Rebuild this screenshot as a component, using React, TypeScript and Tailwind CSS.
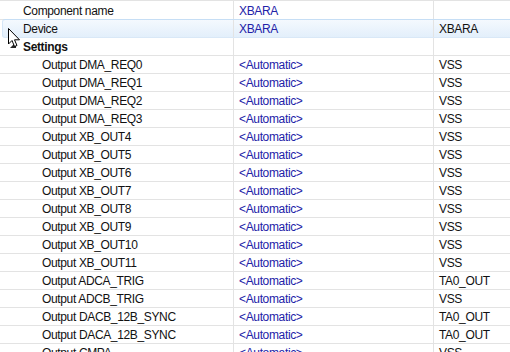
import React from "react";

type Row = { name: string; value: string; third: string; level: number; bold?: boolean; selected?: boolean };

const outputs: [string, string][] = [
  ["Output DMA_REQ0", "VSS"],
  ["Output DMA_REQ1", "VSS"],
  ["Output DMA_REQ2", "VSS"],
  ["Output DMA_REQ3", "VSS"],
  ["Output XB_OUT4", "VSS"],
  ["Output XB_OUT5", "VSS"],
  ["Output XB_OUT6", "VSS"],
  ["Output XB_OUT7", "VSS"],
  ["Output XB_OUT8", "VSS"],
  ["Output XB_OUT9", "VSS"],
  ["Output XB_OUT10", "VSS"],
  ["Output XB_OUT11", "VSS"],
  ["Output ADCA_TRIG", "TA0_OUT"],
  ["Output ADCB_TRIG", "VSS"],
  ["Output DACB_12B_SYNC", "TA0_OUT"],
  ["Output DACA_12B_SYNC", "TA0_OUT"],
  ["Output CMPA", "VSS"],
];

const rows: Row[] = [
  { name: "Component name", value: "XBARA", third: "", level: 0 },
  { name: "Device", value: "XBARA", third: "XBARA", level: 0, selected: true },
  { name: "Settings", value: "", third: "", level: 0, bold: true },
  ...outputs.map(([n, t]) => ({ name: n, value: "<Automatic>", third: t, level: 1 })),
];

export default function App() {
  return (
    <div
      className="relative w-[510px] h-[352px] overflow-hidden bg-white text-[12px] leading-none tracking-[-0.35px]"
      style={{ fontFamily: '"Liberation Sans", Arial, sans-serif' }}
    >
      <div className="border-t border-[#e3e3e3]">
        {rows.map((r, i) => (
          <div
            key={i}
            className={`relative flex h-[18px] border-b ${
              r.selected
                ? "border-[#d9e8f7] bg-gradient-to-b from-[#f4f9fe] to-[#e3effb] rounded-l-[3px] ml-[2px] border-t border-t-[#c6def5] border-l border-l-[#d5e6f7]"
                : "border-[#e3e3e3]"
            }`}
            style={i === 0 ? { height: 19 } : r.selected ? { marginTop: -1, height: 19 } : undefined}
          >
            <div
              className={`shrink-0 flex items-center pt-[1px] text-[#111] ${r.bold ? "font-bold" : ""}`}
              style={{
                width: r.selected ? 230 : 233,
                paddingLeft: (r.level === 0 ? 23 : 42) - (r.selected ? 3 : 0),
              }}
            >
              {r.name}
            </div>
            <div className="w-[200px] shrink-0 flex items-center pt-[1px] border-l border-[#e3e3e3] pl-[5px] text-[#2222a8]">
              {r.value}
            </div>
            <div className="flex-1 flex items-center pt-[1px] border-l border-[#e3e3e3] pl-[5px] text-[#111]">
              {r.third}
            </div>
          </div>
        ))}
      </div>
      {/* expand triangle */}
      <svg className="absolute left-[9px] top-[41px]" width="10" height="10" viewBox="0 0 10 10">
        <polygon points="7,1 7,7 1,7" fill="#262626" />
      </svg>
      {/* mouse cursor */}
      <svg className="absolute left-[8px] top-[28px]" width="14" height="22" viewBox="0 0 14 22">
        <path
          d="M0.5 0.5 L0.5 16 L4 12.5 L6.5 18.5 L9 17.5 L6.5 11.8 L11.5 11.8 Z"
          fill="#fff"
          stroke="#000"
          strokeWidth="1"
          strokeLinejoin="miter"
        />
      </svg>
    </div>
  );
}
